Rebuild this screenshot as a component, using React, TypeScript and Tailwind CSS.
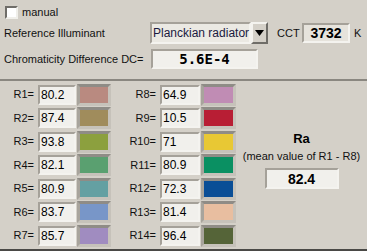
import React from "react";

type RItem = { label: string; value: string; color: string };

const left: RItem[] = [
  { label: "R1=", value: "80.2", color: "#b98a80" },
  { label: "R2=", value: "87.4", color: "#a08c5c" },
  { label: "R3=", value: "93.8", color: "#8ca03e" },
  { label: "R4=", value: "82.1", color: "#5aa070" },
  { label: "R5=", value: "80.9", color: "#64a0a2" },
  { label: "R6=", value: "83.7", color: "#7896c8" },
  { label: "R7=", value: "85.7", color: "#a08cc0" },
];

const right: RItem[] = [
  { label: "R8=", value: "64.9", color: "#c08cb4" },
  { label: "R9=", value: "10.5", color: "#b81e34" },
  { label: "R10=", value: "71", color: "#e8c834" },
  { label: "R11=", value: "80.9", color: "#0a9062" },
  { label: "R12=", value: "72.3", color: "#0a4e96" },
  { label: "R13=", value: "81.4", color: "#e8bea0" },
  { label: "R14=", value: "96.4", color: "#556438" },
];

const font = "font-['Liberation_Sans',Arial,sans-serif]";
const sunken =
  "border-2 border-t-[#a5a199] border-l-[#a5a199] border-r-[#f4f3ef] border-b-[#f4f3ef]";

function Field({ value, className }: { value: string; className: string }) {
  return (
    <div className={`flex items-center ${sunken} bg-[#f1f0ec] pl-[1px] text-[12px] text-black ${className}`}>
      {value}
    </div>
  );
}

function Swatch({ color, width }: { color: string; width: string }) {
  return (
    <div
      className={`h-[22px] ${width} border-[3px] border-t-[#8f8c86] border-l-[#a8a49c] border-r-[#c6c2ba] border-b-[#c6c2ba]`}
    >
      <div className="h-full w-full" style={{ backgroundColor: color }} />
    </div>
  );
}

export default function App() {
  return (
    <div
      className={`h-[251px] w-[367px] overflow-hidden whitespace-nowrap bg-[#d4d0c8] text-[11px] leading-none text-[#111] ${font}`}
    >
      {/* top settings */}
      <div className="flex h-[79px] flex-col pl-[4px]">
        <div className="mt-[6px] flex h-[13px] items-center">
          <div className="ml-[1px] h-[13px] w-[13px] border-2 border-t-[#6f6d68] border-l-[#6f6d68] border-r-[#f0efea] border-b-[#f0efea] bg-white" />
          <span className="ml-[4px]">manual</span>
        </div>
        <div className="mt-[3px] flex h-[22px] items-center">
          <span className="w-[146px]">Reference Illuminant</span>
          <div className="flex h-[22px] w-[118px]">
            <div className={`flex flex-1 items-center ${sunken} bg-[#ebe9e3] pl-[1px] text-[12px] text-[#1a1a40]`}>
              Planckian radiator
            </div>
            <div className="flex w-[18px] items-center justify-center border-2 border-t-[#f4f3ef] border-l-[#f4f3ef] border-r-[#6f6d68] border-b-[#6f6d68] bg-[#d4d0c8]">
              <svg width="9" height="6" viewBox="0 0 9 6">
                <path d="M0 0h9L4.5 6z" fill="#000" />
              </svg>
            </div>
          </div>
          <span className="ml-[9px] w-[25px]">CCT</span>
          <div className={`flex h-[20px] w-[48px] items-center justify-center ${sunken} bg-[#e6e3dc] text-[14px] font-semibold text-black`}>
            3732
          </div>
          <span className="ml-[4px]">K</span>
        </div>
        <div className="mt-[5px] flex h-[20px] items-center">
          <span className="w-[147px]">Chromaticity Difference DC=</span>
          <div
            className={`flex h-[20px] w-[107px] items-center justify-center ${sunken} bg-[#f1f0ec] font-['DejaVu_Sans_Mono',monospace] text-[14px] font-bold text-black`}
          >
            5.6E-4
          </div>
        </div>
      </div>

      {/* results */}
      <div className="flex h-[172px] border-t-2 border-b-2 border-t-[#8a8780] border-b-[#4a4946] pt-[2px]">
        <div className="flex flex-col">
          {left.map((r) => (
            <div key={r.label} className="flex h-[23.5px] items-center">
              <span className="w-[35px] pr-[1px] text-right">{r.label}</span>
              <Field value={r.value} className="ml-[3px] h-[20px] w-[38px]" />
              <div className="ml-[1px]">
                <Swatch color={r.color} width="w-[34px]" />
              </div>
            </div>
          ))}
        </div>
        <div className="flex flex-col">
          {right.map((r) => (
            <div key={r.label} className="flex h-[23.5px] items-center">
              <span className="w-[46px] pr-[1px] text-right">{r.label}</span>
              <Field value={r.value} className="ml-[3px] h-[20px] w-[40px]" />
              <div className="ml-[1px]">
                <Swatch color={r.color} width="w-[35px]" />
              </div>
            </div>
          ))}
        </div>
        <div className="flex flex-1 flex-col items-center pt-[49px]">
          <span className="text-[13px] font-bold text-black">Ra</span>
          <span className="mt-[6px] text-[11px]">(mean value of R1 - R8)</span>
          <div
            className={`mt-[6px] flex h-[21px] w-[74px] items-center justify-center ${sunken} bg-[#f1f0ec] text-[14px] font-semibold text-black`}
          >
            82.4
          </div>
        </div>
      </div>
    </div>
  );
}
